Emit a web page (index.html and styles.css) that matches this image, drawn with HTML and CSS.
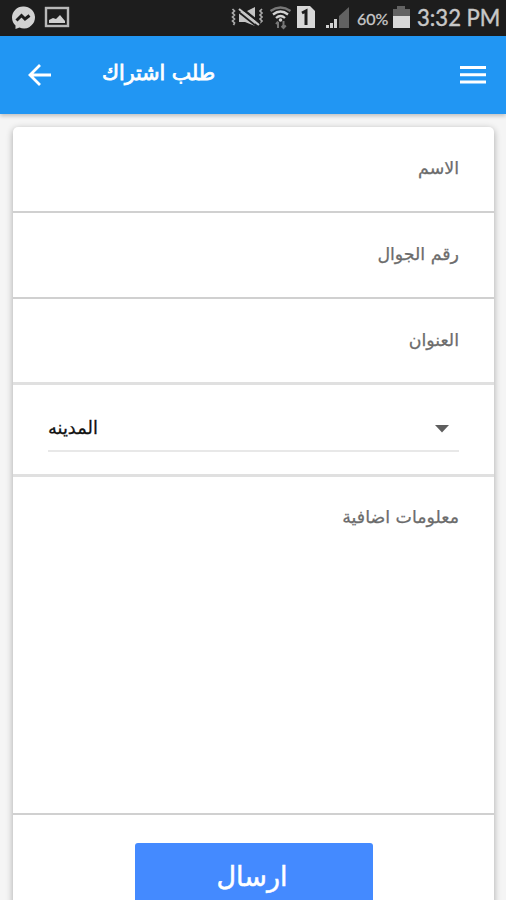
FILE: index.html
```html
<!DOCTYPE html>
<html lang="ar">
<head>
<meta charset="utf-8">
<title>طلب اشتراك</title>
<link rel="stylesheet" href="styles.css">
</head>
<body>
<div class="screen">
  <div class="status">
    <svg class="status-left" width="80" height="36" viewBox="0 0 80 36">
      <path d="M23 6.500a11 11 0 0 0-11 10.800c0 4 1.500 6.500 3.500 8.200V29l4-1.500A11 11 0 1 0 23 6.500z" fill="#d2d2d2"/>
      <path d="M16.500 20.500l5-5 3.500 3.500 4.500-3.500" fill="none" stroke="#1d1d1d" stroke-width="3"/>
      <rect x="46" y="8" width="22" height="18" fill="none" stroke="#b8b8b8" stroke-width="2.400"/>
      <path d="M49 23v-3l4-2 3 1 4-4 5 6v2z" fill="#d0d0d0"/>
    </svg>
    <svg class="status-icons" width="122" height="36" viewBox="230 0 122 36">
      <g fill="none" stroke="#aaa" stroke-width="1.700">
        <path d="M232.500 9l2 2-2 2 2 2-2 2 2 2-2 2 2 2-1 2M262 9l-2 2 2 2-2 2 2 2-2 2 2 2-2 2"/>
      </g>
      <path d="M239 12h6l10-5v19l-10-4h-6z" fill="#c4c4c4"/>
      <path d="M240 7l20 16" stroke="#1d1d1d" stroke-width="2.500"/>
      <path d="M239 9l20 16" stroke="#c8c8c8" stroke-width="2.200"/>
      <path d="M238 11.500l20 16" stroke="#1d1d1d" stroke-width="1.800"/>
      <g fill="none" stroke-width="2.300">
        <path d="M270.500 11q10-7 20 0" stroke="#777"/>
        <path d="M273 14.500q7.500-6 15 0M276 18q4.500-4 9 0" stroke="#d2d2d2"/>
      </g>
      <circle cx="280.500" cy="20" r="1.800" fill="#d2d2d2"/>
      <path d="M278 28v-6m-2 2l2-2.500M283.500 21v7m2.300-2.500l-2.300 2.500-2-2" stroke="#777" stroke-width="2" fill="none"/>
      <path d="M297 6h13l5 5v17h-18z" fill="#d8d8d8"/>
      <path d="M302 13l4-2v14" fill="none" stroke="#1d1d1d" stroke-width="3"/>
      <path d="M326 28v-3h3v3zM330 28v-5h3v5z" fill="#d2d2d2"/>
      <path d="M334 28v-9h3v9z" fill="#d2d2d2"/>
      <path d="M339 28V16L349 7v21z" fill="#626262"/>
    </svg>
    <span class="percent"><span>60%</span></span>
    <svg class="battery" width="18" height="36" viewBox="392 0 18 36">
      <path d="M397 6h8v3h5v7h-17V9h4z" fill="#626262"/>
      <path d="M393 16h17v12h-17z" fill="#d8d8d8"/>
    </svg>
    <span class="clock"><span>3:32 PM</span></span>
  </div>
  <header class="bar">
    <svg class="back" width="24" height="24" viewBox="0 0 24 24"><path d="M23 12H3M12 2L2 12l10 10" fill="none" stroke="#fff" stroke-width="2.800"/></svg>
    <h1 class="title" dir="rtl"><span>طلب اشتراك</span></h1>
    <svg class="menu" width="26" height="20" viewBox="0 0 26 20"><path d="M0 2.500h26M0 9.800h26M0 17h26" stroke="#fff" stroke-width="3"/></svg>
  </header>
  <main class="card">
    <div class="row name"><span class="label" dir="rtl">الاسم</span></div>
    <div class="row phone"><span class="label" dir="rtl">رقم الجوال</span></div>
    <div class="row address"><span class="label" dir="rtl">العنوان</span></div>
    <div class="row city">
      <div class="select">
        <span class="value" dir="rtl">المدينه</span>
        <svg width="14" height="8" viewBox="0 0 14 8"><path d="M0 0h14L7 7.500z" fill="#5e5e5e"/></svg>
      </div>
    </div>
    <div class="row info"><span class="label" dir="rtl">معلومات اضافية</span></div>
    <div class="actions"><button class="send" dir="rtl"><span>ارسال</span></button></div>
  </main>
</div>
</body>
</html>
```
FILE: styles.css
```css
* { box-sizing: border-box; }
body { margin: 0; font-family: "DejaVu Sans", sans-serif; background: #f4f4f4; }
.screen { width: 506px; height: 900px; overflow: hidden; background: #f5f5f5; }
.status { height: 36px; background: #1d1d1d; display: flex; align-items: center; color: #c8c8c8; }
.status svg { display: block; flex: none; }
.status-icons { margin-left: 150px; }
.percent, .clock { flex: none; white-space: nowrap; font-family: Lato, sans-serif; }
.percent { width: 31px; margin: 0 4px 0 5px; font-size: 16px; -webkit-text-stroke: 0.3px; }
.clock { margin: -3px 0 0 7px; font-size: 23px; -webkit-text-stroke: 0.4px; }
.percent span, .clock span { display: inline-block; transform-origin: left; }
.clock span { transform: scaleX(.96); }
.bar { height: 78px; background: #2196f3; box-shadow: 0 2px 4px rgba(0,0,0,.22); position: relative; display: flex; align-items: center; padding: 0 20px 0 28px; color: #fff; }
.title { margin: -4px auto 0 50px; font-size: 21px; font-weight: 400; line-height: 30px; white-space: nowrap; -webkit-text-stroke: 0.8px; }
.title span { display: inline-block; transform-origin: left; transform: scaleX(.98); }
.card { margin: 13px 12px 0 13px; height: 900px; background: #fff; border-radius: 5px; box-shadow: 0 2px 7px rgba(0,0,0,.32); }
.row { padding: 0 35px; display: flex; justify-content: flex-end; align-items: flex-start; border-bottom: 2px solid #d0d0d0; }
.name { height: 86px; }
.phone { height: 86px; }
.address { height: 86px; border-bottom: 3px solid #e0e0e0; }
.city { height: 92px; border-bottom: 3px solid #e0e0e0; }
.info { height: 338px; }
.label { margin-top: 29px; font-size: 17.4px; line-height: 24px; color: #6c6c6c; white-space: nowrap; -webkit-text-stroke: 0.25px; }
.info .label { margin-top: 28px; }
.select { width: 100%; height: 67px; padding: 22px 10px 0 0; border-bottom: 2px solid #e8e8e8; display: flex; align-items: center; justify-content: space-between; }
.value { margin-top: -2px; font-size: 17.8px; line-height: 24px; color: #111; -webkit-text-stroke: 0.3px; }
.actions { display: flex; justify-content: center; padding-top: 28px; }
.send { width: 238px; height: 72px; padding: 0 3px 4px 0; border: 0; border-radius: 3px; background: #448aff; color: #fff; font: 27px/40px "DejaVu Sans", sans-serif; -webkit-text-stroke: 0.5px; }
```
